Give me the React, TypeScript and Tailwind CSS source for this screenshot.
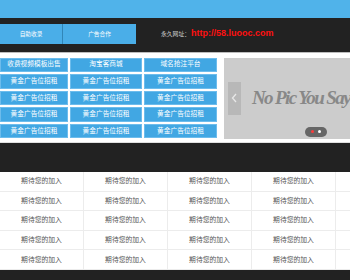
import React from "react";

const cjk = '"Liberation Sans", "Noto Sans CJK SC", sans-serif';

export default function App() {
  const gridRows = [
    ["收费视频模板出售", "淘宝客商城", "域名抢注平台"],
    ["黄金广告位招租", "黄金广告位招租", "黄金广告位招租"],
    ["黄金广告位招租", "黄金广告位招租", "黄金广告位招租"],
    ["黄金广告位招租", "黄金广告位招租", "黄金广告位招租"],
    ["黄金广告位招租", "黄金广告位招租", "黄金广告位招租"],
  ];
  const tableRows = Array.from({ length: 5 });
  const tableCols = Array.from({ length: 5 });
  return (
    <div className="w-[350px] h-[280px] overflow-hidden bg-white" style={{ fontFamily: cjk }}>
      <div className="h-[18px] bg-[#50b3ea]" />
      <div className="h-[34px] bg-[#222222] flex items-start pt-[6px]">
        <div className="w-[62px] h-[20px] bg-[#4aaee8] flex items-center justify-center text-white text-[5.7px]">
          自助收录
        </div>
        <div className="w-[1px] h-[20px] bg-[#3186b8]" />
        <div className="w-[73px] h-[20px] bg-[#4aaee8] flex items-center justify-center text-white text-[5.7px]">
          广告合作
        </div>
        <div className="ml-[25px] h-[20px] flex items-center">
          <span className="text-[5.8px] text-[#cfcfcf]">永久网址：</span>
          <span className="ml-[1px] text-[9px] font-bold text-[#ff1010]">http://58.luooc.com</span>
        </div>
      </div>
      <div className="h-[1px] bg-[#bdbdbd]" />
      <div className="h-[89px] pt-[4.5px] flex items-start">
        <div className="grid grid-cols-[68px_72px_73px] gap-x-[2px] gap-y-[2px]">
          {gridRows.flat().map((t, i) => (
            <div
              key={i}
              className="h-[14.6px] bg-[#41a7e3] border border-[#6dbcec] flex items-center justify-center text-white text-[6.7px] leading-none"
            >
              {t}
            </div>
          ))}
        </div>
        <div className="ml-[7px] w-[126px] h-[81px] bg-[#cccccc] relative overflow-hidden flex items-center">
          <div className="ml-[4px] w-[17px] h-[33px] bg-[#b8b8b8] flex items-center justify-center">
            <svg width="6" height="10" viewBox="0 0 6 10">
              <path d="M5 1 L1.5 5 L5 9" fill="none" stroke="#e8e8e8" strokeWidth="1.3" />
            </svg>
          </div>
          <div
            className="ml-[11px] whitespace-nowrap text-[#888888] italic font-bold text-[19px] tracking-[-1.6px]"
            style={{ fontFamily: '"Liberation Serif", serif' }}
          >
            No Pic You Say
          </div>
          <div className="absolute left-[81px] top-[69px] w-[22px] h-[10px] rounded-full bg-[#666666] flex items-center justify-center gap-[4px]">
            <div className="w-[3px] h-[3px] rounded-full bg-[#ff3b3b]" />
            <div className="w-[3px] h-[3px] rounded-full bg-white" />
          </div>
        </div>
      </div>
      <div className="h-[1px] bg-[#e0e0e0]" />
      <div className="h-[29px] bg-[#222222]" />
      <div className="flex flex-col">
        {tableRows.map((_, r) => (
          <div key={r} className="flex h-[19.6px] border-b border-[#ececec]">
            {tableCols.map((_, c) => (
              <div
                key={c}
                className="w-[84px] shrink-0 border-r border-[#ececec] flex items-center justify-center text-[6.8px] text-[#555555]"
              >
                {c < 4 ? "期待您的加入" : ""}
              </div>
            ))}
          </div>
        ))}
      </div>
      <div className="h-[20px] bg-[#222222]" />
    </div>
  );
}
